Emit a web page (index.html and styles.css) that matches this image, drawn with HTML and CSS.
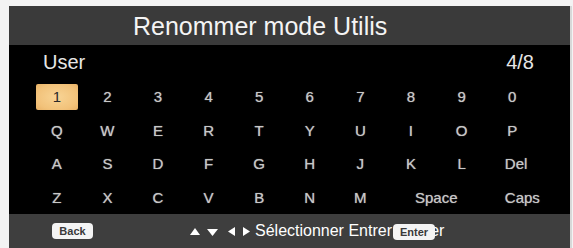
FILE: index.html
```html
<!DOCTYPE html>
<html>
<head>
<meta charset="utf-8">
<link rel="stylesheet" href="styles.css">
</head>
<body>
<div class="panel">
  <div class="title">Renommer mode Utilis</div>
  <div class="name-row"><span class="name">User</span><span class="count">4/8</span></div>
  <div class="keys">
    <div class="key"><span class="sel">1</span></div>
    <div class="key">2</div><div class="key">3</div><div class="key">4</div><div class="key">5</div>
    <div class="key">6</div><div class="key">7</div><div class="key">8</div><div class="key">9</div><div class="key">0</div>
    <div class="key">Q</div><div class="key">W</div><div class="key">E</div><div class="key">R</div><div class="key">T</div>
    <div class="key">Y</div><div class="key">U</div><div class="key">I</div><div class="key">O</div><div class="key">P</div>
    <div class="key">A</div><div class="key">S</div><div class="key">D</div><div class="key">F</div><div class="key">G</div>
    <div class="key">H</div><div class="key">J</div><div class="key">K</div><div class="key">L</div><div class="key wide">Del</div>
    <div class="key">Z</div><div class="key">X</div><div class="key">C</div><div class="key">V</div><div class="key">B</div>
    <div class="key">N</div><div class="key">M</div><div class="key span2">Space</div><div class="key wide">Caps</div>
  </div>
  <div class="footer">
    <span class="btn back">Back</span>
    <span class="arrows">
      <svg width="62" height="12" viewBox="0 0 62 12">
        <polygon points="0,10 5,3 10,10" fill="#fff"/>
        <polygon points="17,4 28,4 22.5,11" fill="#fff"/>
        <polygon points="45,2 45,11 38,6.5" fill="#fff"/>
        <polygon points="53,2 53,11 60,6.5" fill="#fff"/>
      </svg>
    </span>
    <span class="hint">Sélectionner Entrer Quitter<span class="btn enter">Enter</span></span>
  </div>
</div>
</body>
</html>
```
FILE: styles.css
```css
html, body {
  margin: 0;
  padding: 0;
  background: #f3f3f3;
}
body {
  width: 573px;
  height: 248px;
  overflow: hidden;
  font-family: "Liberation Sans", Arial, sans-serif;
}
.panel {
  margin: 6px 0 0 9px;
  width: 561px;
  height: 242px;
  background: #000;
  display: flex;
  flex-direction: column;
  box-shadow: 2px 0 0 #d8d8d8;
}
.title {
  height: 39px;
  background: #3a3a3a;
  color: #f4f4f4;
  font-size: 25px;
  line-height: 41px;
  padding-left: 124px;
  white-space: nowrap;
}
.name-row {
  height: 35px;
  display: flex;
  justify-content: space-between;
  align-items: center;
  padding: 0 36px 0 34px;
  color: #e6e6e6;
  font-size: 20px;
}
.keys {
  display: grid;
  grid-template-columns: repeat(10, 50.6px);
  grid-auto-rows: 33.5px;
  padding-left: 22.5px;
  height: 134px;
}
.key {
  display: flex;
  align-items: center;
  justify-content: center;
  color: #c8c8c8;
  font-size: 15px;
  text-shadow: 0 0 1px #9a9a9a;
}
.key.wide {
  justify-content: flex-start;
  padding-left: 18px;
}
.key.span2 {
  grid-column: span 2;
}
.sel {
  width: 42px;
  height: 26px;
  background: radial-gradient(ellipse at center, #f8d495 0%, #f2c27a 70%, #e9b266 100%);
  border-radius: 2px;
  color: #2a2a2a;
  text-shadow: none;
  display: flex;
  align-items: center;
  justify-content: center;
}
.footer {
  flex: 1;
  background: #3e3e3e;
  display: flex;
  align-items: center;
  color: #fff;
  font-size: 16px;
}
.btn {
  display: inline-block;
  background: #f4f4f4;
  color: #3a3a3a;
  border-radius: 4px;
  font-size: 11px;
  font-weight: bold;
  height: 16px;
  line-height: 16px;
  text-align: center;
}
.back {
  width: 41px;
  margin-left: 43px;
}
.arrows {
  margin-left: 97px;
  display: flex;
  align-items: center;
}
.hint {
  margin-left: 3px;
  position: relative;
  white-space: nowrap;
}
.enter {
  position: absolute;
  left: 138px;
  top: 2px;
  width: 42px;
}
```
